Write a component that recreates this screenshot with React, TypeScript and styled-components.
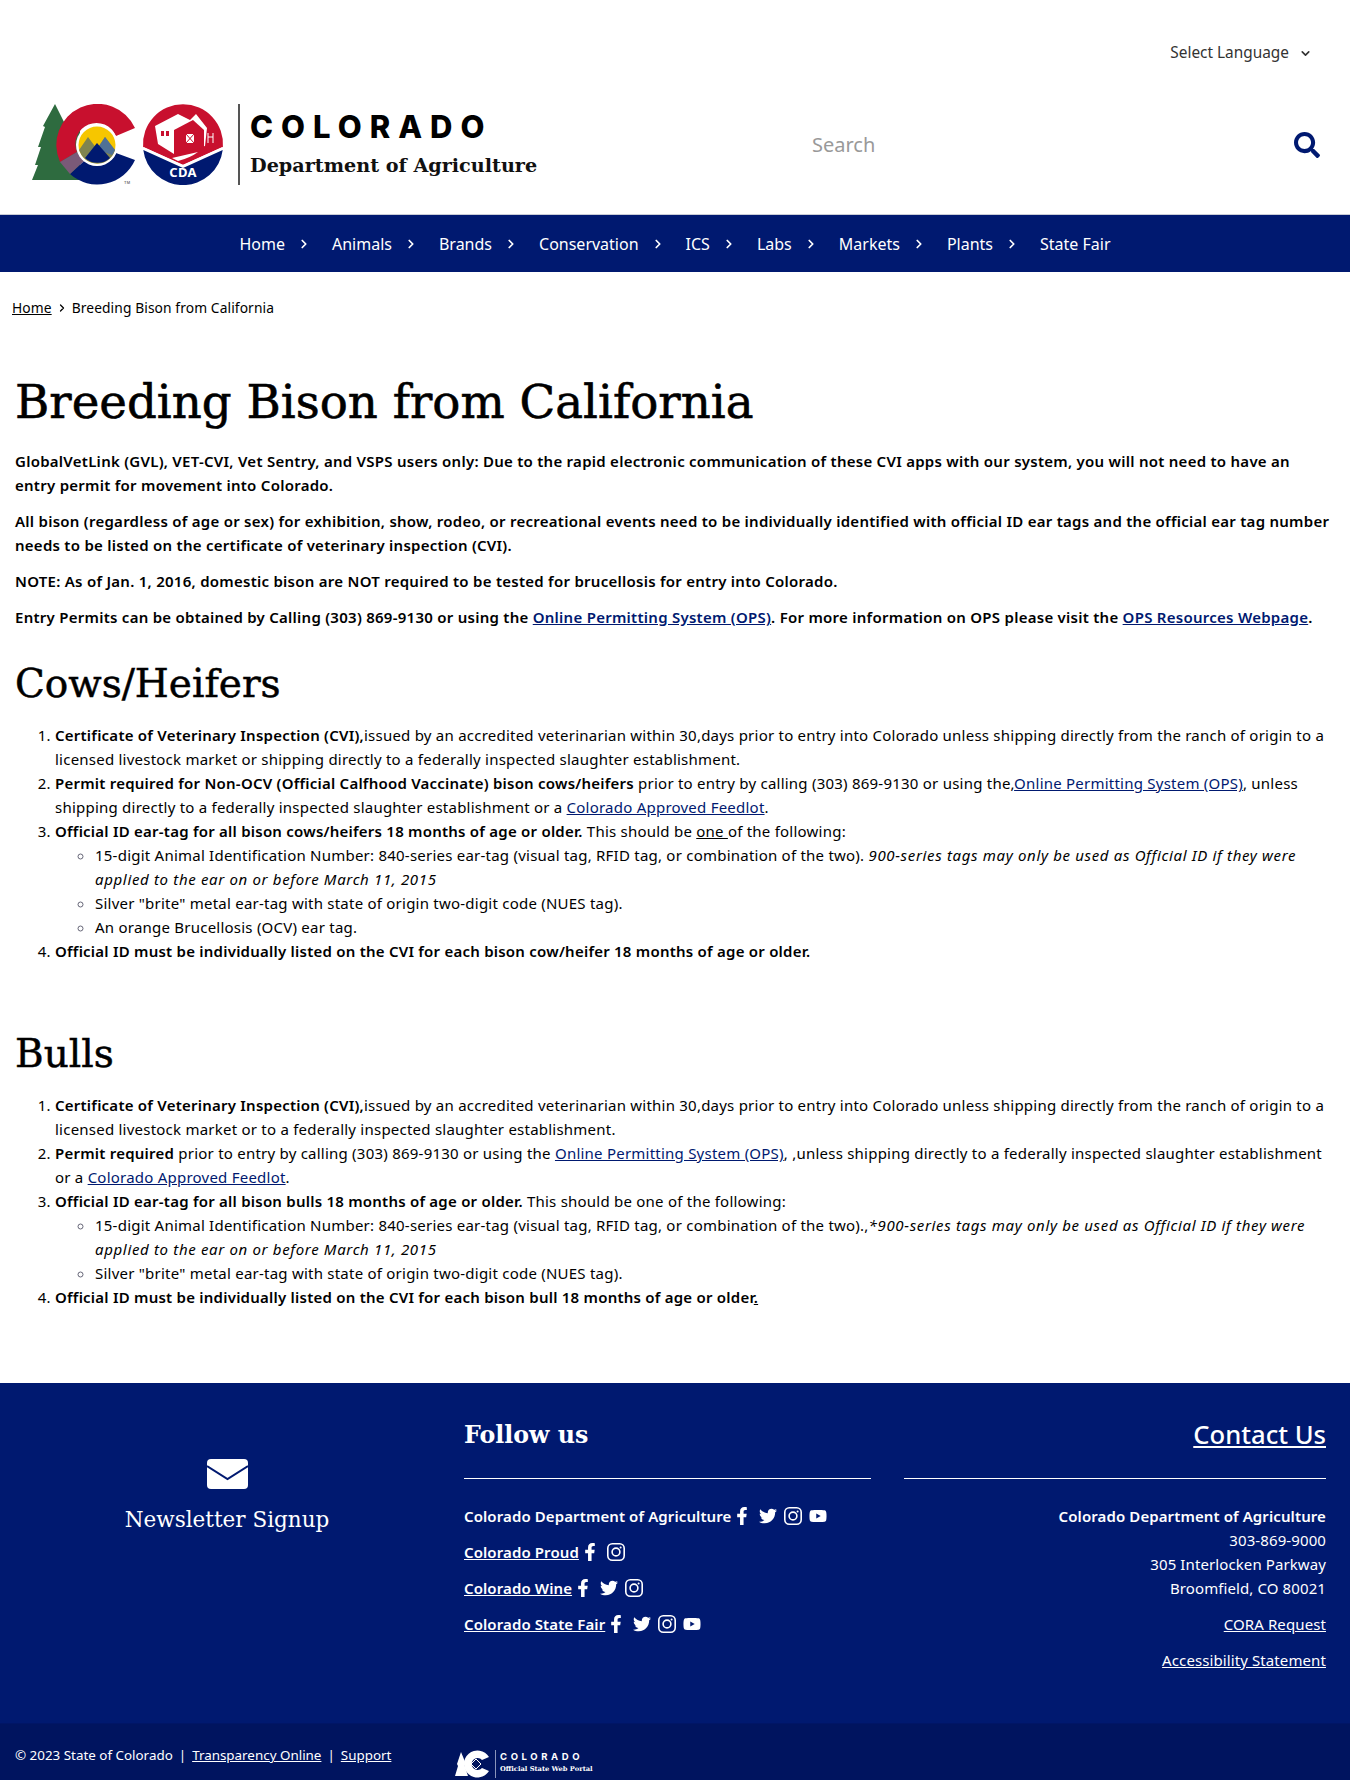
import React from "react";
import styled, { createGlobalStyle } from "styled-components";
import { FaFacebookF, FaSearch, FaTwitter, FaYoutube } from "react-icons/fa";
import { FiChevronDown, FiChevronRight } from "react-icons/fi";

const navy = "#001970";
const SLAB = `"DejaVu Serif", "Liberation Serif", serif`;

const GlobalStyle = createGlobalStyle`
  * { box-sizing: border-box; }
  body {
    margin: 0;
    background: #fff;
    color: #000;
    font-family: "Noto Sans", "Open Sans", sans-serif;
    font-size: 15px;
    line-height: 24px;
    letter-spacing: 0.23px;
  }
`;

const Page = styled.div`
  width: 1350px;
`;

const LangRow = styled.div`
  height: 104px;
  padding: 41px 38px 0 0;
  display: flex;
  justify-content: flex-end;
  align-items: flex-start;
  gap: 10px;
  color: #333;
  font-size: 15.4px;
  letter-spacing: 0;
`;

const LangChevron = styled(FiChevronDown)`
  margin-top: 6px;
  width: 13px;
  height: 13px;
  stroke-width: 3;
`;

const Masthead = styled.header`
  height: 110px;
  display: flex;
  justify-content: space-between;
  padding: 0 30px 0 30px;
`;

const Brand = styled.div`
  display: flex;
  height: 81px;
`;

const LogoMark = styled.svg`
  width: 208px;
  height: 81px;
  display: block;
`;

const BrandDivider = styled.div`
  width: 2px;
  height: 81px;
  background: #555;
  margin-right: 10px;
`;

const BrandText = styled.div`
  display: flex;
  flex-direction: column;
  letter-spacing: 0;
`;

const BrandState = styled.div`
  font-family: Inter, sans-serif;
  font-weight: 800;
  font-size: 31px;
  line-height: 38px;
  letter-spacing: 8px;
  margin-top: 4px;
`;

const BrandDept = styled.div`
  font-family: ${SLAB};
  font-weight: 700;
  font-size: 19.2px;
  line-height: 28px;
  margin-top: 6px;
  color: #111;
`;

const SearchBox = styled.div`
  width: 508px;
  height: 81px;
  display: flex;
  align-items: center;
  justify-content: space-between;
  color: #999;
  font-size: 20px;
  letter-spacing: 0;
`;

const SearchIcon = styled(FaSearch)`
  color: ${navy};
  width: 26px;
  height: 26px;
`;

const NavBar = styled.nav`
  height: 58px;
  background: ${navy};
  border-top: 1px solid #c9ccd6;
  display: flex;
  align-items: center;
  justify-content: center;
  color: #fff;
  font-size: 16px;
  letter-spacing: 0;
`;

const NavItem = styled.span`
  display: inline-flex;
  align-items: center;
`;

const NavChevron = styled(FiChevronRight)`
  width: 14px;
  height: 14px;
  margin: 1px 21px 0 12px;
  stroke-width: 3;
`;

const Crumbs = styled.div`
  padding: 24px 12px 0;
  font-size: 13.8px;
  letter-spacing: 0.1px;
  display: flex;
  align-items: center;
  gap: 4px;
  a { color: #000; text-decoration: underline; }
`;

const CrumbChevron = styled(FiChevronRight)`
  width: 12px;
  height: 12px;
  stroke-width: 2.5;
`;

const Main = styled.main`
  padding: 0 18px 0 15px;
`;

const Title = styled.h1`
  font-family: ${SLAB};
  font-weight: 400;
  font-size: 46.7px;
  line-height: 60px;
  letter-spacing: 0;
  -webkit-text-stroke: 0.6px #000;
  margin: 52px 0 17px;
`;

const Lead = styled.p`
  margin: 0 0 12px;
  font-weight: 600;
  letter-spacing: 0.26px;
`;

const Section = styled.h2`
  font-family: ${SLAB};
  font-weight: 400;
  font-size: 39px;
  line-height: 48px;
  letter-spacing: 0;
  -webkit-text-stroke: 0.5px #000;
  margin: 31px 0 15px;
`;

const Steps = styled.ol`
  margin: 0 0 67px;
  padding-left: 40px;
`;

const Sub = styled.ul`
  margin: 0;
  padding-left: 40px;
  list-style: circle;
  li::marker { color: #667; }
`;

const Strong = styled.b`
  font-weight: 600;
`;

const Note = styled.i`
  letter-spacing: 0.66px;
`;

const BlueLink = styled.a`
  color: #001970;
  text-decoration: underline;
`;

const Underlined = styled.u``;

const Footer = styled.footer`
  margin-top: 74px;
  background: ${navy};
  color: #fff;
  letter-spacing: 0.1px;
`;

const FooterMain = styled.div`
  height: 340px;
  display: grid;
  grid-template-columns: 464px 440px 1fr;
  padding-right: 24px;
`;

const Newsletter = styled.div`
  display: flex;
  flex-direction: column;
  align-items: center;
  padding: 76px 10px 0 0;
`;

const MailIcon = styled.svg`
  width: 41px;
  height: 30px;
  display: block;
`;

const NewsletterLabel = styled.div`
  font-family: ${SLAB};
  font-size: 21.5px;
  line-height: 30px;
  letter-spacing: 0;
  margin-top: 16px;
`;

const FollowColumn = styled.div`
  padding-right: 33px;
`;

const FooterHeading = styled.div`
  height: 96px;
  padding-top: 35px;
  border-bottom: 1px solid #fff;
  font-family: ${SLAB};
  font-weight: 700;
  font-size: 23.7px;
  line-height: 34px;
  letter-spacing: 0;
`;

const ContactHeading = styled(FooterHeading)`
  font-family: "Noto Sans", sans-serif;
  font-weight: 500;
  font-size: 25.6px;
  text-align: right;
  a { color: #fff; }
`;

const Socials = styled.div`
  padding-top: 25px;
  display: flex;
  flex-direction: column;
  gap: 12px;
  a { color: #fff; }
`;

const SocialRow = styled.div`
  display: flex;
  align-items: center;
  height: 24px;
  font-weight: 600;
`;

const SocialIcons = styled.span`
  display: inline-flex;
  align-items: center;
  gap: 7px;
  margin-left: 2px;
  svg { width: auto; height: 18px; display: block; }
  svg:first-child { margin-right: 1px; }
`;

const Contact = styled.div`
  padding-top: 25px;
  text-align: right;
  a { color: #fff; }
`;

const ContactGap = styled.div`
  margin-top: 12px;
`;

const FooterBar = styled.div`
  height: 57px;
  background: #00145f;
  border-top: 1px solid #001566;
  display: flex;
  padding: 20px 0 0 15px;
  font-size: 13.4px;
  letter-spacing: 0;
  a { color: #fff; }
`;

const Legal = styled.div`
  width: 440px;
  display: flex;
  gap: 6px;
  line-height: 22px;
`;

const PortalMark = styled.div`
  display: flex;
  align-items: flex-start;
  margin-top: 6px;
  gap: 4px;
`;

const PortalLogo = styled.svg`
  width: 36px;
  height: 28px;
  display: block;
`;

const PortalText = styled.div`
  border-left: 1px solid #8a94bb;
  padding-left: 4px;
  height: 28px;
`;

const PortalState = styled.div`
  font-family: Inter, sans-serif;
  font-weight: 700;
  font-size: 9.5px;
  line-height: 13px;
  letter-spacing: 3.6px;
`;

const PortalSub = styled.div`
  font-family: ${SLAB};
  font-weight: 700;
  font-size: 6.7px;
  line-height: 13px;
`;

function Logo() {
  return (
    <LogoMark viewBox="30 104 208 81">
      <path d="M55 104 L65 124 L80 124 L80 180 L32 180 L38 165 L35 165 L41 147 L38 147 L45 127 L43 126 Z" fill="#2e6b3f" />
      <path d="M135 128 A41 41 0 1 0 60 162 L77 152 A21 21 0 1 1 116 136 Z" fill="#c8102e" />
      <path d="M70 174 A41 41 0 0 0 135 160 L116 153 A21 21 0 0 1 84 161 Z" fill={navy} />
      <path d="M60 162 L70 174 L84 161 L77 152 Z" fill="#7a5a78" />
      <circle cx="97" cy="145" r="21" fill="#fff" />
      <circle cx="97" cy="145" r="18.5" fill="#f6c600" />
      <path d="M79 150 L88 137 L97 149 L105 137 L115 150 A18.5 18.5 0 0 1 80 152 Z" fill="#7f8450" />
      <path d="M97 149 L105 137 L115 150 L112 155 Z" fill="#4f7196" />
      <path d="M85 158 L97 143 L110 158 A18.5 18.5 0 0 1 85 158 Z" fill={navy} />
      <text x="124" y="184" fontSize="4" fontFamily="Liberation Sans" fill="#333">TM</text>
      <path d="M143.1 147 A40 40 0 1 1 222.9 147 L183 165 Z" fill="#c8102e" />
      <path d="M143.3 150 L183 168 L222.7 150 A40 40 0 0 1 143.3 150 Z" fill={navy} />
      <path d="M143.2 148 L183 166 L222.8 148" stroke="#fff" strokeWidth="2" fill="none" />
      <path d="M155 126 L178 114 L190 120 L196 114 L207 128 L205 146 L174 154 L158 144 Z" fill="#fff" />
      <path d="M174 130 L193 120 L204 130 L204 147 L174 155 Z" fill="#c8102e" />
      <rect x="161" y="131" width="3" height="5" fill="#c8102e" />
      <rect x="166" y="131" width="3" height="5" fill="#c8102e" />
      <rect x="186" y="134" width="8" height="9" fill="#fff" />
      <path d="M186 134 L194 143 M194 134 L186 143" stroke="#c8102e" strokeWidth="1" />
      <path d="M208 133 V143 M213 133 V143 M208 137 H213" stroke="#fff" strokeWidth="1" />
      <path d="M172 158 Q185 155 198 152 Q190 158 178 161 Z" fill="#fff" />
      <text x="183" y="177" textAnchor="middle" fontSize="13" fontWeight="700" fontFamily="Noto Sans" fill="#fff">CDA</text>
    </LogoMark>
  );
}

function InstagramIcon() {
  return (
    <svg viewBox="0 0 18 18">
      <rect x="0.8" y="0.8" width="16.4" height="16.4" rx="4.5" fill="none" stroke="#fff" strokeWidth="1.6" />
      <circle cx="9" cy="9" r="3.9" fill="none" stroke="#fff" strokeWidth="1.6" />
      <circle cx="13.6" cy="4.4" r="1" fill="#fff" />
    </svg>
  );
}

function SocialSet({ tw = true, yt = true }: { tw?: boolean; yt?: boolean }) {
  return (
    <SocialIcons>
      <FaFacebookF />
      {tw && <FaTwitter />}
      <InstagramIcon />
      {yt && <FaYoutube />}
    </SocialIcons>
  );
}

const navItems = ["Home", "Animals", "Brands", "Conservation", "ICS", "Labs", "Markets", "Plants", "State Fair"];

export default function App() {
  return (
    <Page>
      <GlobalStyle />
      <LangRow>
        Select Language
        <LangChevron />
      </LangRow>
      <Masthead>
        <Brand>
          <Logo />
          <BrandDivider />
          <BrandText>
            <BrandState>COLORADO</BrandState>
            <BrandDept>Department of Agriculture</BrandDept>
          </BrandText>
        </Brand>
        <SearchBox>
          Search
          <SearchIcon />
        </SearchBox>
      </Masthead>
      <NavBar>
        {navItems.map((item, i) => (
          <NavItem key={item}>
            {item}
            {i < navItems.length - 1 && <NavChevron />}
          </NavItem>
        ))}
      </NavBar>
      <Crumbs>
        <a href="#">Home</a>
        <CrumbChevron />
        Breeding Bison from California
      </Crumbs>
      <Main>
        <Title>Breeding Bison from California</Title>
        <Lead>GlobalVetLink (GVL), VET-CVI, Vet Sentry, and VSPS users only: Due to the rapid electronic communication of these CVI apps with our system, you will not need to have an entry permit for movement into Colorado.</Lead>
        <Lead>All bison (regardless of age or sex) for exhibition, show, rodeo, or recreational events need to be individually identified with official ID ear tags and the official ear tag number needs to be listed on the certificate of veterinary inspection (CVI).</Lead>
        <Lead>NOTE: As of Jan. 1, 2016, domestic bison are NOT required to be tested for brucellosis for entry into Colorado.</Lead>
        <Lead>Entry Permits can be obtained by Calling (303) 869-9130 or using the <BlueLink href="#">Online Permitting System (OPS)</BlueLink>. For more information on OPS please visit the <BlueLink href="#">OPS Resources Webpage</BlueLink>.</Lead>
        <Section>Cows/Heifers</Section>
        <Steps>
          <li><Strong>Certificate of Veterinary Inspection (CVI),</Strong>issued by an accredited veterinarian within 30,days prior to entry into Colorado unless shipping directly from the ranch of origin to a licensed livestock market or shipping directly to a federally inspected slaughter establishment.</li>
          <li><Strong>Permit required for Non-OCV (Official Calfhood Vaccinate) bison cows/heifers</Strong> prior to entry by calling (303) 869-9130 or using the,<BlueLink href="#">Online Permitting System (OPS)</BlueLink>, unless shipping directly to a federally inspected slaughter establishment or a <BlueLink href="#">Colorado Approved Feedlot</BlueLink>.</li>
          <li><Strong>Official ID ear-tag for all bison cows/heifers 18 months of age or older.</Strong> This should be <Underlined>one </Underlined>of the following:
            <Sub>
              <li>15-digit Animal Identification Number: 840-series ear-tag (visual tag, RFID tag, or combination of the two). <Note>900-series tags may only be used as Official ID if they were applied to the ear on or before March 11, 2015</Note></li>
              <li>Silver "brite" metal ear-tag with state of origin two-digit code (NUES tag).</li>
              <li>An orange Brucellosis (OCV) ear tag.</li>
            </Sub>
          </li>
          <li><Strong>Official ID must be individually listed on the CVI for each bison cow/heifer 18 months of age or older.</Strong></li>
        </Steps>
        <Section>Bulls</Section>
        <Steps>
          <li><Strong>Certificate of Veterinary Inspection (CVI),</Strong>issued by an accredited veterinarian within 30,days prior to entry into Colorado unless shipping directly from the ranch of origin to a licensed livestock market or to a federally inspected slaughter establishment.</li>
          <li><Strong>Permit required</Strong> prior to entry by calling (303) 869-9130 or using the <BlueLink href="#">Online Permitting System (OPS)</BlueLink>, ,unless shipping directly to a federally inspected slaughter establishment or a <BlueLink href="#">Colorado Approved Feedlot</BlueLink>.</li>
          <li><Strong>Official ID ear-tag for all bison bulls 18 months of age or older.</Strong> This should be one of the following:
            <Sub>
              <li>15-digit Animal Identification Number: 840-series ear-tag (visual tag, RFID tag, or combination of the two).,<Note>*900-series tags may only be used as Official ID if they were applied to the ear on or before March 11, 2015</Note></li>
              <li>Silver "brite" metal ear-tag with state of origin two-digit code (NUES tag).</li>
            </Sub>
          </li>
          <li><Strong>Official ID must be individually listed on the CVI for each bison bull 18 months of age or older<Underlined>.</Underlined></Strong></li>
        </Steps>
      </Main>
      <Footer>
        <FooterMain>
          <Newsletter>
            <MailIcon viewBox="0 0 41 30">
              <rect width="41" height="30" rx="4" fill="#fff" />
              <path d="M0 7 L20.5 20 L41 7" stroke={navy} strokeWidth="2" fill="none" />
            </MailIcon>
            <NewsletterLabel>Newsletter Signup</NewsletterLabel>
          </Newsletter>
          <FollowColumn>
            <FooterHeading>Follow us</FooterHeading>
            <Socials>
              <SocialRow>Colorado Department of Agriculture<SocialSet /></SocialRow>
              <SocialRow><a href="#">Colorado Proud</a><SocialSet tw={false} yt={false} /></SocialRow>
              <SocialRow><a href="#">Colorado Wine</a><SocialSet yt={false} /></SocialRow>
              <SocialRow><a href="#">Colorado State Fair</a><SocialSet /></SocialRow>
            </Socials>
          </FollowColumn>
          <div>
            <ContactHeading><a href="#">Contact Us</a></ContactHeading>
            <Contact>
              <Strong>Colorado Department of Agriculture</Strong>
              <div>303-869-9000</div>
              <div>305 Interlocken Parkway</div>
              <div>Broomfield, CO 80021</div>
              <ContactGap><a href="#">CORA Request</a></ContactGap>
              <ContactGap><a href="#">Accessibility Statement</a></ContactGap>
            </Contact>
          </div>
        </FooterMain>
        <FooterBar>
          <Legal>
            © 2023 State of Colorado <span>|</span> <a href="#">Transparency Online</a> <span>|</span> <a href="#">Support</a>
          </Legal>
          <PortalMark>
            <PortalLogo viewBox="0 0 36 28">
              <path d="M6 2 L11 14 L9 14 L13 26 L0 26 L3 16 L2 14 Z" fill="#fff" />
              <path d="M34 7 A13.5 13.5 0 1 0 34 21 L27 18 A6 6 0 1 1 27 10 Z" fill="#fff" />
              <path d="M16 14 L21 9 L26 14 L21 19 Z" fill="none" stroke="#fff" strokeWidth="1" />
            </PortalLogo>
            <PortalText>
              <PortalState>COLORADO</PortalState>
              <PortalSub>Official State Web Portal</PortalSub>
            </PortalText>
          </PortalMark>
        </FooterBar>
      </Footer>
    </Page>
  );
}
